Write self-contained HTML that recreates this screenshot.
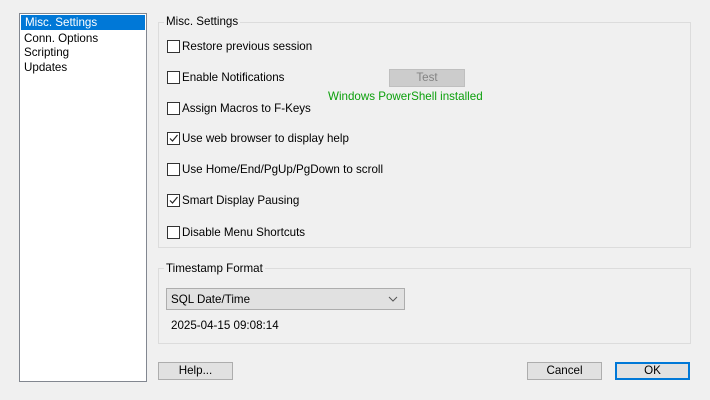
<html><head><style>
body{margin:0;width:710px;height:400px;background:#f0f0f0;font-family:"Liberation Sans",sans-serif;font-size:11.6px;color:#000;position:relative;overflow:hidden}
.a{position:absolute;white-space:nowrap}
.list{left:19px;top:13px;width:126px;height:367px;background:#fff;border:1px solid #828790}
.list div{padding-left:4px;height:14.5px;line-height:15px}
.sel{background:#0078d7;color:#fff;margin:1px}
.grp{border:1px solid #dcdcdc}
.t{background:#f0f0f0;padding:0 2px}
.cb{width:11px;height:11px;border:1px solid #333;background:#fff}
.btn{border:1px solid #adadad;background:#e1e1e1;text-align:center;line-height:16px;height:16px}
</style></head><body>
<div class="a list"><div class="sel">Misc. Settings</div><div>Conn. Options</div><div>Scripting</div><div>Updates</div></div>
<div class="a grp" style="left:158px;top:22px;width:531px;height:224px"></div>
<div class="a t" style="left:164px;top:15px">Misc. Settings</div>
<div class="a cb" style="left:167px;top:40px"></div><div class="a" style="left:182px;top:40px">Restore previous session</div>
<div class="a cb" style="left:167px;top:71px"></div><div class="a" style="left:182px;top:71px">Enable Notifications</div>
<div class="a cb" style="left:167px;top:102px"></div><div class="a" style="left:182px;top:102px">Assign Macros to F-Keys</div>
<div class="a cb" style="left:167px;top:132px"><svg width="11" height="11" style="position:absolute;left:0;top:0"><path d="M2 5.5L4.5 8L9.5 2" fill="none" stroke="#222" stroke-width="1.2"/></svg></div><div class="a" style="left:182px;top:132px">Use web browser to display help</div>
<div class="a cb" style="left:167px;top:163px"></div><div class="a" style="left:182px;top:163px">Use Home/End/PgUp/PgDown to scroll</div>
<div class="a cb" style="left:167px;top:194px"><svg width="11" height="11" style="position:absolute;left:0;top:0"><path d="M2 5.5L4.5 8L9.5 2" fill="none" stroke="#222" stroke-width="1.2"/></svg></div><div class="a" style="left:182px;top:194px">Smart Display Pausing</div>
<div class="a cb" style="left:167px;top:226px"></div><div class="a" style="left:182px;top:226px">Disable Menu Shortcuts</div>
<div class="a btn" style="left:389px;top:69px;width:74px;color:#838383;border-color:#bfbfbf;background:#ccc">Test</div>
<div class="a" style="left:328px;top:90px;color:#0ca00c">Windows PowerShell installed</div>
<div class="a grp" style="left:158px;top:268px;width:531px;height:74px"></div>
<div class="a t" style="left:164px;top:262px">Timestamp Format</div>
<div class="a" style="left:166px;top:288px;width:237px;height:20px;border:1px solid #adadad;background:#e1e1e1;line-height:21px"><span style="padding-left:4px">SQL Date/Time</span><svg width="10" height="6" style="position:absolute;right:6px;top:7px"><path d="M1 1L5 5L9 1" fill="none" stroke="#555"/></svg></div>
<div class="a" style="left:171px;top:319px">2025-04-15 09:08:14</div>
<div class="a btn" style="left:158px;top:362px;width:73px">Help...</div>
<div class="a btn" style="left:527px;top:362px;width:73px">Cancel</div>
<div class="a btn" style="left:615px;top:362px;width:71px;height:14px;line-height:14px;border:2px solid #0078d7">OK</div>
</body></html>
